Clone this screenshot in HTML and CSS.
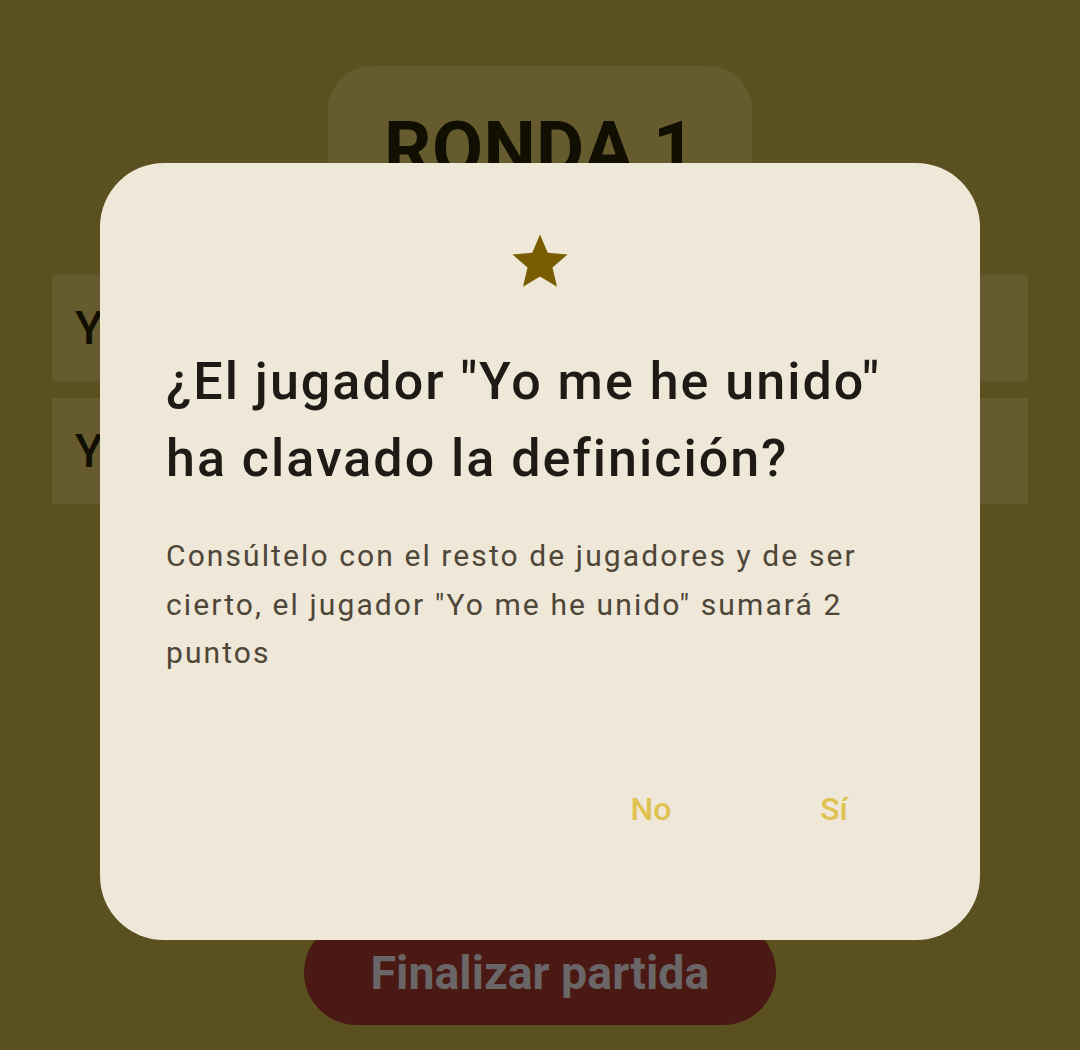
FILE: index.html
```html
<!DOCTYPE html>
<html lang="es">
<head>
<meta charset="utf-8">
<title>Ronda 1</title>
<link rel="stylesheet" href="styles.css">
</head>
<body>
<div class="screen">
  <div class="round-card"><h1 class="round-title">RONDA 1</h1></div>
  <div class="players">
    <div class="player-row">Yo me he unido</div>
    <div class="player-row">Yo me he unido</div>
  </div>
  <div class="spacer"></div>
  <button class="finish-btn">Finalizar partida</button>
</div>

<div class="dialog">
  <svg class="dialog-icon" viewBox="0 0 24 24" width="66" height="66" aria-hidden="true">
    <path d="M12 17.27L18.18 21l-1.64-7.03L22 9.24l-7.19-.61L12 2 9.19 8.63 2 9.24l5.46 4.73L5.82 21z" fill="#7a5c00"/>
  </svg>
  <h2 class="dialog-title">¿El jugador "Yo me he unido" ha clavado la definición?</h2>
  <p class="dialog-text">Consúltelo con el resto de jugadores y de ser cierto, el jugador "Yo me he unido" sumará 2 puntos</p>
  <div class="dialog-actions">
    <button class="text-btn">No</button>
    <button class="text-btn">Sí</button>
  </div>
</div>
</body>
</html>
```

FILE: styles.css
```css
html, body {
  margin: 0;
  padding: 0;
}
body {
  width: 1080px;
  height: 1050px;
  background: #5b5020;
  font-family: Roboto, "Noto Sans", sans-serif;
  overflow: hidden;
  position: relative;
}
.screen {
  height: 1050px;
  display: flex;
  flex-direction: column;
  align-items: center;
  box-sizing: border-box;
  padding: 66px 52px 25px;
}
.round-card {
  width: 424px;
  height: 170px;
  background: #665a2f;
  border-radius: 44px;
  display: flex;
  justify-content: center;
  box-sizing: border-box;
  padding-top: 46px;
}
.round-title {
  margin: 0;
  font-size: 74px;
  letter-spacing: 0.5px;
  font-weight: 700;
  color: #110e02;
  line-height: 1;
}
.players {
  align-self: stretch;
  margin-top: 39px;
  display: flex;
  flex-direction: column;
  gap: 17px;
}
.player-row {
  height: 106px;
  background: #665a2f;
  display: flex;
  align-items: center;
  padding-left: 23px;
  font-size: 46px;
  font-weight: 500;
  color: #110e02;
}
.spacer {
  flex: 1;
}
.finish-btn {
  width: 472px;
  height: 105px;
  border: none;
  border-radius: 53px;
  background: #4b1913;
  color: #6a6567;
  font-family: Roboto, sans-serif;
  font-size: 46.5px;
  font-weight: 700;
}
.dialog {
  position: absolute;
  left: 100px;
  top: 163px;
  width: 880px;
  height: 777px;
  box-sizing: border-box;
  background: #efe7d7;
  border-radius: 64px;
  padding: 66px 66px 0;
  display: flex;
  flex-direction: column;
}
.dialog-icon {
  display: block;
  align-self: center;
}
.dialog-title {
  margin: 48px 0 0;
  font-size: 52px;
  line-height: 77px;
  letter-spacing: 2px;
  font-weight: 500;
  color: #1e1b16;
}
.dialog-text {
  margin: 35px 0 0;
  font-size: 30px;
  line-height: 48.5px;
  letter-spacing: 2.1px;
  font-weight: 400;
  color: #4e4639;
}
.dialog-actions {
  margin-top: auto;
  margin-bottom: 106px;
  display: flex;
  justify-content: flex-end;
  gap: 43px;
  padding-right: 10px;
}
.text-btn {
  width: 140px;
  border: none;
  background: transparent;
  font-family: Roboto, sans-serif;
  font-size: 32px;
  font-weight: 500;
  color: #dfc250;
  padding: 6px 0;
}
```
